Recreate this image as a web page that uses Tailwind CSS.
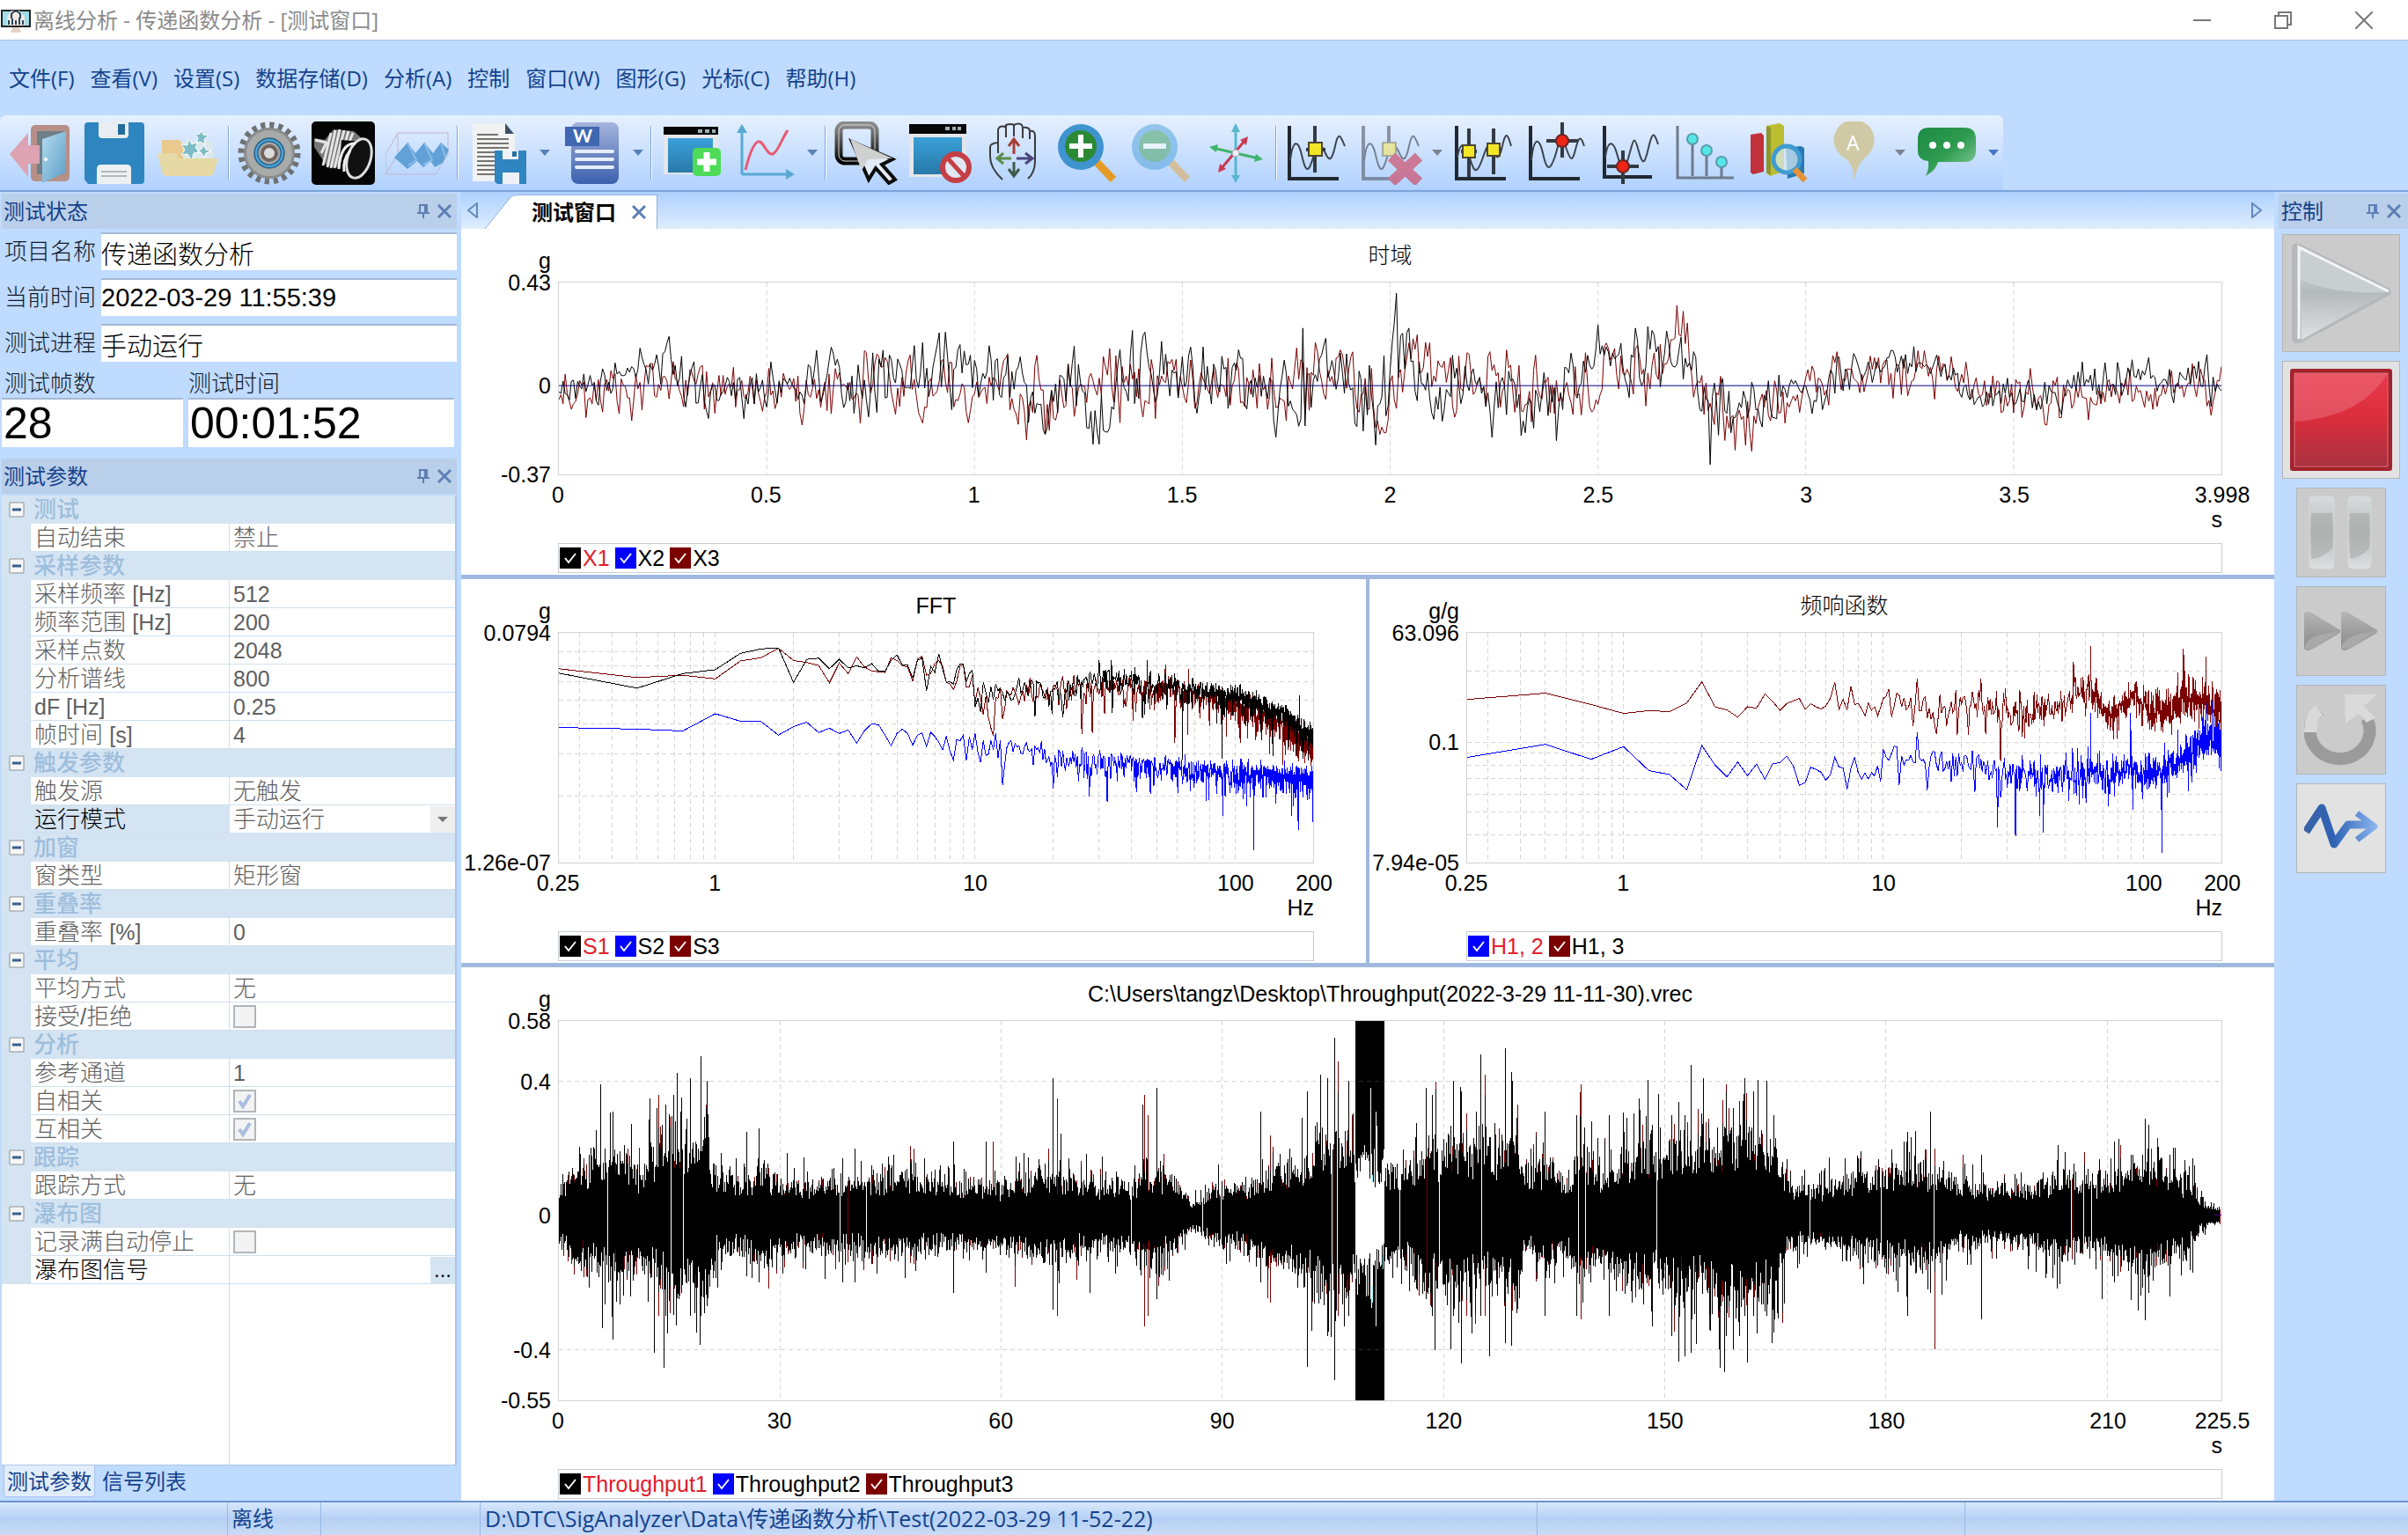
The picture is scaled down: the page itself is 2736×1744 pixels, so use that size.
<!DOCTYPE html>
<html lang="zh-CN">

<head>
  <meta charset="UTF-8">
  <meta name="viewport" content="width=device-width, initial-scale=1.0">
  <title>离线分析 - 传递函数分析 - [测试窗口]</title>
  <script src="https://cdn.jsdelivr.net/npm/@tailwindcss/browser@4"></script>
</head>

<body class="flex min-h-screen flex-col bg-[#bfdbff] font-['Open_Sans','Noto_Sans_CJK_SC',sans-serif] text-2xl leading-8 text-[#15428b]">

  <!-- title bar -->
  <header class="flex h-[45px] items-center bg-white text-[#8a8a8a]">
    <svg class="h-8 w-9 shrink-0" viewBox="0 0 36 32">
      <path d="M2 5h32v18H2z" fill="#9fdde8" stroke="#222" stroke-width="2" />
      <path d="M8 22V12l5-7h9l6 7v10z" fill="#f3e7e0" />
      <path d="M13 14V9q5-7 10 0v5M10 21v-5M14 21v-7M18 21v-5M22 21v-8M26 21v-5" fill="none" stroke="#27465c" stroke-width="2" />
      <path d="M14 24h8l2 6H12z" fill="#e5d3c8" />
    </svg>
    <h1 class="ml-[2px] flex-1">离线分析 - 传递函数分析 - [测试窗口]</h1>
    <button class="grid h-full w-[92px] place-items-center" aria-label="最小化">
      <svg class="size-5" viewBox="0 0 20 20"><path d="M0 10h20" stroke="#777" stroke-width="2" /></svg>
    </button>
    <button class="grid h-full w-[92px] place-items-center" aria-label="还原">
      <svg class="size-5" viewBox="0 0 20 20" fill="none" stroke="#777" stroke-width="2"><path d="M1 5h14v14H1zM5 5V1h14v14h-4" /></svg>
    </button>
    <button class="mr-1 grid h-full w-[92px] place-items-center" aria-label="关闭">
      <svg class="size-5" viewBox="0 0 20 20"><path d="M0 0l20 20M20 0L0 20" stroke="#777" stroke-width="2" /></svg>
    </button>
  </header>

  <!-- menu -->
  <nav class="flex h-[86px] items-center gap-[18px] border-t border-[#a9c4e8] pl-[10px]">
    <a href="#">文件(F)</a>
    <a href="#">查看(V)</a>
    <a href="#">设置(S)</a>
    <a href="#">数据存储(D)</a>
    <a href="#">分析(A)</a>
    <a href="#">控制</a>
    <a href="#">窗口(W)</a>
    <a href="#">图形(G)</a>
    <a href="#">光标(C)</a>
    <a href="#">帮助(H)</a>
  </nav>

  <!-- toolbar -->
  <div class="flex h-[87px] border-b-2 border-[#7ba4dc]">
    <svg class="absolute size-0">
      <defs>
        <linearGradient id="door" x1="0" y1="0" x2="1" y2="1"><stop offset="0" stop-color="#b4dcf0" /><stop offset="1" stop-color="#5c9dc5" /></linearGradient>
        <linearGradient id="word" x1="0" y1="0" x2="0" y2="1"><stop offset="0" stop-color="#a5b4dc" /><stop offset="1" stop-color="#3d60ad" /></linearGradient>
        <linearGradient id="win" x1="0" y1="0" x2="0" y2="1"><stop offset="0" stop-color="#3aa0d8" /><stop offset="1" stop-color="#2879a8" /></linearGradient>
        <linearGradient id="frame" x1="0" y1="0" x2="0" y2="1"><stop offset="0" stop-color="#8c8c8c" /><stop offset="1" stop-color="#050505" /></linearGradient>
        <linearGradient id="chat" x1="0" y1="0" x2="1" y2="1"><stop offset="0" stop-color="#1b8a43" /><stop offset=".5" stop-color="#2e9b50" /><stop offset="1" stop-color="#8fd0a2" /></linearGradient>
        <linearGradient id="grey" x1="0" y1="0" x2="0" y2="1"><stop offset="0" stop-color="#d8dcdc" /><stop offset=".5" stop-color="#b5baba" /><stop offset="1" stop-color="#dfe1e1" /></linearGradient>
        <linearGradient id="red" x1="0" y1="0" x2="0" y2="1"><stop offset="0" stop-color="#e8394a" /><stop offset=".5" stop-color="#d92d3c" /><stop offset="1" stop-color="#a83240" /></linearGradient>
        <linearGradient id="dark" x1="0" y1="0" x2="0" y2="1"><stop offset="0" stop-color="#b5b5b5" /><stop offset="1" stop-color="#888" /></linearGradient>
        <linearGradient id="blue" x1="0" y1="0" x2="84" y2="0" gradientUnits="userSpaceOnUse"><stop offset="0" stop-color="#3a63a8" /><stop offset=".4" stop-color="#2f63b4" /><stop offset="1" stop-color="#8db8f0" /></linearGradient>
      </defs>
    </svg>
    <div class="flex rounded-t-md bg-linear-to-b from-[#e6f0fe] to-[#b0d1ff] pl-1 [&>button]:grid [&>button]:w-[84px] [&>button]:place-items-center [&>button.caret]:w-[22px] [&>button>svg]:size-[72px] [&>button.caret>svg]:h-[7px] [&>button.caret>svg]:w-3 [&>hr]:mx-[3px] [&>hr]:my-3 [&>hr]:h-auto [&>hr]:w-[2px] [&>hr]:border-0 [&>hr]:border-l [&>hr]:border-[#7fa3d4] [&>hr]:bg-white">
      <button aria-label="退出">
        <svg viewBox="0 0 72 72">
          <rect x="25" y="4" width="44" height="64" rx="5" fill="#b68f87" /><rect x="32" y="11" width="31" height="49" fill="#6f7f88" />
          <path d="M38 20l27-9v47l-27 12z" fill="url(#door)" /><path d="M1 37l21-24v14h13v21H22v15z" fill="#dda3b2" /><circle cx="42" cy="43" r="2" fill="#fff" />
        </svg>
      </button>
      <button aria-label="保存">
        <svg viewBox="0 0 72 72">
          <path d="M6 1h60a4 4 0 014 4v62a4 4 0 01-4 4H6l-4-5V5a4 4 0 014-4z" fill="#2f85bf" /><path d="M18 1h34v14q0 4-4 4H22q-4 0-4-4z" fill="#e8edf1" />
          <rect x="40" y="3" width="8" height="12" fill="#246b9c" /><path d="M16 71V54q0-5 5-5h29q5 0 5 5v17z" fill="#edf0f2" /><path d="M21 57h29M21 62h29" stroke="#b5b8ba" stroke-width="2" />
        </svg>
      </button>
      <button aria-label="打开">
        <svg viewBox="0 0 72 72">
          <path d="M6 21h20l5 7h33v25H6z" fill="#e9c98d" /><path d="M30 22h34v26H30z" fill="#dbe9ee" />
          <path d="M36 20l4 6 7-3-3 7 6 5-8 1-2 8-5-7-7 1 4-6-4-6 7 1zM51 10l2 5 6 1-5 4 1 6-5-3-5 2 2-6-3-4 5-1zM54 27l2 5 6 2-6 2-2 5-3-5-5-2 5-3z" fill="#7dbcc4" stroke="#fff" />
          <path d="M1 38q0-2 3-2h18l4 6h44l-5 16q-1 4-5 4H12q-5 0-6-5z" fill="#e6d9a6" />
        </svg>
      </button>
      <hr>
      <button aria-label="设置">
        <svg viewBox="0 0 72 72" fill="none">
          <circle cx="36" cy="36" r="31" stroke="#6f7273" stroke-width="9" stroke-dasharray="5 4.74" /><circle cx="36" cy="36" r="22" fill="#a5a7a7" stroke="#8b8d8d" stroke-width="14" /><circle cx="36" cy="36" r="22" stroke="#a9abab" stroke-width="8" />
          <circle cx="36" cy="36" r="15" stroke="#23668f" stroke-width="5" /><circle cx="36" cy="36" r="15" stroke="#52a9dc" stroke-width="2" /><circle cx="36" cy="36" r="8" fill="#dcdcdc" stroke="#71665f" stroke-width="4" />
        </svg>
      </button>
      <button aria-label="传感器">
        <svg viewBox="0 0 72 72">
          <rect width="72" height="72" rx="5" fill="#050505" /><path d="M3 19l12 2 10-12 23 2 12 11 8 8-15 34-20-11-16-3L3 29z" fill="#777" />
          <path d="M4 21l13 3-6 12M22 13l-9 37M27 10l-9 42M32 9l-10 44M37 10L26 53M42 11L31 49M47 13L36 40" fill="none" stroke="#e4e4e4" stroke-width="3" />
          <path d="M34 21l35 3-14 41-24-10z" fill="#0b0b0b" /><ellipse cx="54" cy="42" rx="13" ry="23" transform="rotate(18 54 42)" fill="#111" stroke="#ddd" stroke-width="3" />
          <path d="M31 54q2-30 19-29M37 57q-2-13 7-24" fill="none" stroke="#eee" stroke-width="3" />
        </svg>
      </button>
      <button aria-label="瀑布图">
        <svg viewBox="0 0 72 72">
          <path d="M0 38l14-25h57v24L57 60H0zM14 13v24M14 37h57M0 60l14-23" fill="none" stroke="#c3b4cc" stroke-width="1" />
          <path d="M10 41l15-17 9 12 10-12 10 12 9-12 9 8-7 15-9 5-5-7-8 7-7-7-11 9z" fill="#62a0d8" /><path d="M25 24l10 20-9 6M44 24l9 20-10 5M63 24l5 17" fill="none" stroke="#89bde7" stroke-width="2" />
        </svg>
      </button>
      <hr>
      <button aria-label="保存报告">
        <svg viewBox="0 0 72 72">
          <path d="M7 2h37l11 12v54H7z" fill="#f1f2f2" /><path d="M44 2l10 12H44z" fill="#3a5268" />
          <path d="M12 15h24M12 20h36M12 25h36M12 30h36M12 35h36M12 40h22M12 45h22M12 50h22M12 55h22M12 60h22" stroke="#77736f" stroke-width="2" />
          <path d="M32 33h36v38H35l-3-3z" fill="#2f85bf" /><path d="M41 33h18v10H41zM41 58h19v13H41z" fill="#eef2f4" /><path d="M52 34h5v6h-5z" fill="#2673a8" />
        </svg>
      </button>
      <button class="caret" aria-label="更多"><svg viewBox="0 0 12 7"><path d="M0 0h12L6 7z" fill="#5981b4" /></svg></button>
      <button aria-label="Word 报告">
        <svg viewBox="0 0 72 72">
          <rect x="13" y="1" width="54" height="70" rx="8" fill="url(#word)" /><rect x="6" y="6" width="39" height="22" fill="#4067b2" />
          <text x="15" y="24" fill="#fff" font-family="Lato" font-size="21" font-weight="bold">W</text><path d="M19 34h41M19 43h41M19 52h41" stroke="#e6ecfa" stroke-width="4" stroke-linecap="round" />
        </svg>
      </button>
      <button class="caret" aria-label="更多"><svg viewBox="0 0 12 7"><path d="M0 0h12L6 7z" fill="#5981b4" /></svg></button>
      <hr>
      <button aria-label="新建窗口">
        <svg viewBox="0 0 72 72">
          <rect x="4" y="6" width="62" height="54" fill="#e4e6ea" /><rect x="4" y="6" width="62" height="9" fill="#060606" /><path d="M43 9h5v4h-5zM51 9h5v4h-5zM59 9h4v4h-4z" fill="#9eb0b5" />
          <rect x="9" y="19" width="51" height="39" fill="url(#win)" /><rect x="37" y="30" width="32" height="32" rx="5" fill="#4edb58" /><path d="M53 35v22M42 46h22" stroke="#fff" stroke-width="7" />
        </svg>
      </button>
      <button aria-label="曲线">
        <svg viewBox="0 0 72 72" fill="none">
          <path d="M9 60V8M9 60h54" stroke="#58aad3" stroke-width="3" /><path d="M9 3l6 10H3zM69 60l-10-6v12z" fill="#58aad3" />
          <path d="M13 55q7-28 14-32c6-3 10 16 17 14 6-2 11-19 17-27" stroke="#e85a73" stroke-width="3" />
        </svg>
      </button>
      <button class="caret" aria-label="更多"><svg viewBox="0 0 12 7"><path d="M0 0h12L6 7z" fill="#5981b4" /></svg></button>
      <hr>
      <button aria-label="选择">
        <svg viewBox="0 0 72 72">
          <rect x="5" y="4" width="41" height="41" rx="7" fill="none" stroke="url(#frame)" stroke-width="9" /><rect x="5" y="4" width="41" height="41" rx="7" fill="none" stroke="#d8d8d8" stroke-width="1" />
          <path d="M20 23l46 20-12 6 15 17-7 4-15-17-8 13z" fill="#e3ecf6" stroke="#0b0b0b" stroke-width="4" /><path d="M18 20l48 22-28 1-7 13z" fill="#cfd0d0" />
        </svg>
      </button>
      <button aria-label="关闭窗口">
        <svg viewBox="0 0 72 72">
          <rect x="1" y="3" width="65" height="60" fill="#e4e6ea" /><rect x="1" y="3" width="65" height="11" fill="#060606" /><path d="M42 6h5v4h-5zM50 6h4v4h-4zM56 6h4v4h-4z" fill="#9eb0b5" />
          <rect x="6" y="18" width="55" height="42" fill="url(#win)" /><circle cx="54" cy="52" r="15" fill="#dee7f2" stroke="#c43f46" stroke-width="6" /><path d="M44 41l20 22" stroke="#c43f46" stroke-width="5" />
        </svg>
      </button>
      <button aria-label="平移">
        <svg viewBox="0 0 72 72" fill="none" stroke="#3b3b3f" stroke-width="2">
          <path d="M23 66Q9 53 9 40V29q0-4 9-5V9q2-5 8-3l1-2q6-2 9 0 6-3 9 0l1 3q8-1 8 4 6-1 6 5v29q0 13-8 20M18 9v15M27 5v13M36 4v13M46 6v13M54 10v10M18 24v12" />
          <path d="M36 21v16M30 28l6-8 6 8" stroke="#a93f35" stroke-width="3" /><path d="M17 42h16M24 36l-7 6 7 6" stroke="#5c8c4c" stroke-width="3" />
          <path d="M39 42h17M49 36l8 6-8 6" stroke="#4d457c" stroke-width="3" /><path d="M36 46v16M30 54l6 8 6-8" stroke="#3d5a49" stroke-width="3" />
        </svg>
      </button>
      <button aria-label="放大">
        <svg viewBox="0 0 72 72">
          <path d="M44 44l21 22" stroke="#e69b27" stroke-width="9" /><circle cx="28" cy="29" r="26" fill="#3f93cf" /><circle cx="28" cy="28" r="18" fill="#2c8a37" /><path d="M28 15v26M15 28h26" stroke="#fff" stroke-width="6" />
        </svg>
      </button>
      <button class="opacity-50" aria-label="缩小">
        <svg viewBox="0 0 72 72">
          <path d="M44 44l21 22" stroke="#e6a43c" stroke-width="9" /><circle cx="28" cy="29" r="26" fill="#4aa0da" /><circle cx="28" cy="28" r="18" fill="#3d9b55" /><path d="M15 28h26" stroke="#fff" stroke-width="6" />
        </svg>
      </button>
      <button aria-label="坐标轴">
        <svg viewBox="0 0 72 72" fill="none" stroke-width="3">
          <path d="M36 8v56" stroke="#58b6cf" /><path d="M36 2l5 10H31zM36 70l5-9H31z" fill="#58b6cf" /><path d="M10 30l52 12" stroke="#3fb36d" /><path d="M6 29l10-3-2 9zM67 43l-10 3 2-9z" fill="#3fb36d" />
          <path d="M20 53l27-32" stroke="#cb3950" /><path d="M50 17l-2 10-7-6zM16 58l2-10 7 6z" fill="#cb3950" /><circle cx="36" cy="36" r="4" fill="#eef" stroke="#aaa" stroke-width="1" />
        </svg>
      </button>
      <hr>
      <button aria-label="单光标">
        <svg viewBox="0 0 72 72" fill="none">
          <path d="M5 5v62M3 65h58" stroke="#222831" stroke-width="4" /><path d="M6 44C9 20 15 20 19 38S26 60 31 44 40 22 45 34 53 46 57 28 63 16 68 28" stroke="#3d444e" stroke-width="2" />
          <path d="M34 5v53M24 32h22" stroke="#333a44" stroke-width="4" /><rect x="27" y="24" width="15" height="15" fill="#f3e626" stroke="#4b4630" stroke-width="2" />
        </svg>
      </button>
      <button class="opacity-60" aria-label="删除光标">
        <svg viewBox="0 0 72 72" fill="none">
          <path d="M5 5v62M3 65h38" stroke="#555b68" stroke-width="4" /><path d="M6 44C9 20 15 20 19 38S26 60 31 44 40 22 45 34 53 46 57 28 63 16 68 28" stroke="#3d444e" stroke-width="2" />
          <path d="M34 5v30" stroke="#555b68" stroke-width="4" /><rect x="27" y="24" width="15" height="15" fill="#f3e660" stroke="#8b8660" stroke-width="2" /><path d="M37 40l31 29M68 40L37 69" stroke="#d0384f" stroke-width="12" />
        </svg>
      </button>
      <button class="caret" aria-label="更多"><svg viewBox="0 0 12 7"><path d="M0 0h12L6 7z" fill="#7a8391" /></svg></button>
      <button aria-label="双光标">
        <svg viewBox="0 0 72 72" fill="none">
          <path d="M5 5v62M3 65h58" stroke="#222831" stroke-width="4" /><path d="M6 40C9 22 15 24 19 38S26 64 33 46 40 22 45 32 53 46 57 28 63 14 67 28" stroke="#3d444e" stroke-width="2" />
          <path d="M19 8v55M47 8v52M10 34h18M38 32h18" stroke="#333a44" stroke-width="4" /><rect x="12" y="27" width="14" height="14" fill="#f3e626" stroke="#4b4630" stroke-width="2" /><rect x="40" y="25" width="14" height="14" fill="#f3e626" stroke="#4b4630" stroke-width="2" />
        </svg>
      </button>
      <button aria-label="峰值">
        <svg viewBox="0 0 72 72" fill="none">
          <path d="M5 5v62M3 65h58" stroke="#222831" stroke-width="4" /><path d="M6 44C9 16 15 18 19 36S26 58 32 42 38 8 44 26 52 48 56 32 62 16 66 28" stroke="#3d444e" stroke-width="2" />
          <path d="M41 1v40M23 22h36" stroke="#333a44" stroke-width="4" /><circle cx="41" cy="22" r="7" fill="#ee2415" stroke="#6b2723" stroke-width="2" />
        </svg>
      </button>
      <button aria-label="谷值">
        <svg viewBox="0 0 72 72" fill="none">
          <path d="M5 5v60M3 63h56" stroke="#222831" stroke-width="4" /><path d="M6 40C9 20 15 22 19 36S26 62 32 42 38 12 44 34 52 42 56 26 62 14 66 26" stroke="#3d444e" stroke-width="2" />
          <path d="M26 33v38M8 51h36" stroke="#333a44" stroke-width="4" /><circle cx="26" cy="51" r="7" fill="#ee2415" stroke="#6b2723" stroke-width="2" />
        </svg>
      </button>
      <button aria-label="谐波">
        <svg viewBox="0 0 72 72" fill="none">
          <path d="M4 5v59H68M21 24v38M37 34v28M54 45v18" stroke="#6f7b8c" stroke-width="3" /><g fill="#55e7e8" stroke="#5b9aa9" stroke-width="2"><circle cx="21" cy="20" r="6" /><circle cx="37" cy="33" r="6" /><circle cx="54" cy="46" r="6" /></g>
        </svg>
      </button>
      <button aria-label="分析">
        <svg viewBox="0 0 72 72">
          <path d="M3 15l12-2 3 3v41l-12 3-3-2z" fill="#c2323a" /><path d="M21 5l15-3 5 3v52l-16 5-4-3z" fill="#bcbd31" /><path d="M21 5l5 2v54l-5-3z" fill="#8c962b" /><path d="M43 30l17-2 4 2v29l-19 6z" fill="#2879b2" />
          <circle cx="44" cy="43" r="15" fill="#d8ebf5" fill-opacity=".7" stroke="#409bd2" stroke-width="5" /><path d="M53 54l12 13" stroke="#e69236" stroke-width="7" />
        </svg>
      </button>
      <button aria-label="标注">
        <svg viewBox="0 0 72 72">
          <path d="M37 67q-2-21-12-26A23 23 0 1151 39q-11 9-14 28z" fill="#cfc9a6" /><text x="28" y="33" fill="#fff" font-family="Open Sans" font-size="23">A</text>
        </svg>
      </button>
      <button class="caret" aria-label="更多"><svg viewBox="0 0 12 7"><path d="M0 0h12L6 7z" fill="#7a8391" /></svg></button>
      <button aria-label="注释">
        <svg viewBox="0 0 72 72">
          <path d="M16 7h40q13 0 13 13v13q0 13-13 13H26q-2 9-14 16 4-8 3-17Q3 44 3 33V20Q3 7 16 7z" fill="url(#chat)" /><g fill="#fff"><circle cx="20" cy="27" r="4" /><circle cx="36" cy="27" r="4" /><circle cx="52" cy="27" r="4" /></g>
        </svg>
      </button>
      <button class="caret" aria-label="更多"><svg viewBox="0 0 12 7"><path d="M0 0h12L6 7z" fill="#4478c4" /></svg></button>
    </div>
  </div>

  <svg class="absolute size-0">
    <symbol id="pin" viewBox="0 0 16 18"><path d="M4 2h8v9H4zM10 2v9M1 11h14M8 11v6" fill="none" stroke="#5c7fb5" stroke-width="2" /></symbol>
    <symbol id="close" viewBox="0 0 16 16"><path d="M1 1l14 14M15 1L1 15" fill="none" stroke="#5c7fb5" stroke-width="3" /></symbol>
    <symbol id="minus" viewBox="0 0 18 18"><path d="M1 1h16v16H1z" fill="#f6f6f4" stroke="#8d9298" stroke-width="1" /><path d="M4 9h10" stroke="#39608f" stroke-width="3" /></symbol>
  </svg>

  <main class="flex flex-1">

    <!-- left panels -->
    <aside class="flex w-[524px] shrink-0 flex-col pr-[5px] pl-[2px]">
      <div class="mt-[2px] flex h-10 items-center gap-2 bg-[#bacfe9] pr-[6px] pl-[2px]">
        <h2 class="flex-1">测试状态</h2>
        <button aria-label="固定"><svg class="h-[18px] w-4"><use href="#pin" /></svg></button>
        <button aria-label="关闭"><svg class="size-4"><use href="#close" /></svg></button>
      </div>
      <form class="font-['Liberation_Sans','Noto_Sans_CJK_SC',sans-serif] text-[26px] font-light text-[#101828] [&_input]:w-full [&_input]:min-w-0 [&_input]:border-t-2 [&_input]:border-[#a5b9d5] [&_input]:bg-white [&_input]:text-black">
        <div class="mt-1 grid grid-cols-[108px_1fr] items-center gap-x-[2px] gap-y-[9px] pl-[3px] [&_input]:h-[43px] [&_input]:text-[29px]">
          <label for="project">项目名称</label>
          <input id="project" value="传递函数分析" readonly>
          <label for="now">当前时间</label>
          <input id="now" class="font-normal" value="2022-03-29 11:55:39" readonly>
          <label for="process">测试进程</label>
          <input id="process" value="手动运行" readonly>
        </div>
        <div class="mt-[9px] grid grid-cols-[206px_1fr] gap-x-[6px] pr-[3px] [&_input]:h-14 [&_input]:pl-[2px] [&_input]:text-[50px] [&_input]:font-normal">
          <label for="frames" class="pl-[3px]">测试帧数</label>
          <label for="elapsed">测试时间</label>
          <input id="frames" value="28" readonly>
          <input id="elapsed" value="00:01:52" readonly>
        </div>
      </form>

      <div class="mt-[13px] flex h-10 items-center gap-2 bg-[#bacfe9] pr-[6px] pl-[2px]">
        <h2 class="flex-1">测试参数</h2>
        <button aria-label="固定"><svg class="h-[18px] w-4"><use href="#pin" /></svg></button>
        <button aria-label="关闭"><svg class="size-4"><use href="#close" /></svg></button>
      </div>
      <div class="mt-[2px] flex flex-1 flex-col border-r-2 border-b border-[#a9c6ea] bg-white">
        <table class="w-full table-fixed border-separate border-spacing-0 bg-[#d5e4f2] text-left font-['Liberation_Sans','Noto_Sans_CJK_SC',sans-serif] text-[26px] leading-[30px] font-light text-[#606060] [&_i]:text-[25px] [&_i]:leading-[30px] [&_i]:font-normal [&_i]:not-italic [&_td]:h-8 [&_td]:overflow-hidden [&_td]:border-b [&_td]:border-l [&_td]:border-[#cfe0ef] [&_td]:bg-white [&_td]:py-0 [&_td]:pl-1 [&_th]:h-8 [&_th]:py-0 [&_th]:font-medium [&_th]:text-[#9dbedd] [&_th_svg]:mx-2 [&_th_svg]:size-[18px]">
          <colgroup><col class="w-8"><col class="w-[226px]"><col></colgroup>
          <tbody>
            <tr><th><svg><use href="#minus" /></svg></th><th colspan="2" class="pl-1">测试</th></tr>
            <tr><th></th><td>自动结束</td><td>禁止</td></tr>
            <tr><th><svg><use href="#minus" /></svg></th><th colspan="2" class="pl-1">采样参数</th></tr>
            <tr><th></th><td>采样频率 <i>[Hz]</i></td><td><i>512</i></td></tr>
            <tr><th></th><td>频率范围 <i>[Hz]</i></td><td><i>200</i></td></tr>
            <tr><th></th><td>采样点数</td><td><i>2048</i></td></tr>
            <tr><th></th><td>分析谱线</td><td><i>800</i></td></tr>
            <tr><th></th><td><i>dF [Hz]</i></td><td><i>0.25</i></td></tr>
            <tr><th></th><td>帧时间 <i>[s]</i></td><td><i>4</i></td></tr>
            <tr><th><svg><use href="#minus" /></svg></th><th colspan="2" class="pl-1">触发参数</th></tr>
            <tr><th></th><td>触发源</td><td>无触发</td></tr>
            <tr class="[&>td:nth-child(2)]:bg-[#d5e4f2]">
              <th></th>
              <td class="text-black"><label for="mode">运行模式</label></td>
              <td>
                <div class="flex items-center">
                  <select id="mode" class="h-[30px] flex-1 appearance-none p-0 leading-[30px]" disabled><option>手动运行</option></select>
                  <span class="grid h-[30px] w-7 place-items-center bg-[#efefef]"><svg class="h-[6px] w-3" viewBox="0 0 12 6"><path d="M0 0h12L6 6z" fill="#777" /></svg></span>
                </div>
              </td>
            </tr>
            <tr><th><svg><use href="#minus" /></svg></th><th colspan="2" class="pl-1">加窗</th></tr>
            <tr><th></th><td>窗类型</td><td>矩形窗</td></tr>
            <tr><th><svg><use href="#minus" /></svg></th><th colspan="2" class="pl-1">重叠率</th></tr>
            <tr><th></th><td>重叠率 <i>[%]</i></td><td><i>0</i></td></tr>
            <tr><th><svg><use href="#minus" /></svg></th><th colspan="2" class="pl-1">平均</th></tr>
            <tr><th></th><td>平均方式</td><td>无</td></tr>
            <tr><th></th><td><label for="accept">接受/拒绝</label></td><td><input id="accept" type="checkbox" class="block size-[26px] appearance-none border-2 border-[#b2b5b8] bg-[#f3f3f3]" disabled></td></tr>
            <tr><th><svg><use href="#minus" /></svg></th><th colspan="2" class="pl-1">分析</th></tr>
            <tr><th></th><td>参考通道</td><td><i>1</i></td></tr>
            <tr>
              <th></th><td><label for="auto">自相关</label></td>
              <td><div class="relative"><input id="auto" type="checkbox" class="block size-[26px] appearance-none border-2 border-[#b2b5b8] bg-[#f3f3f3]" checked disabled><svg class="pointer-events-none absolute top-0 left-0 size-[26px]" viewBox="0 0 26 26"><path d="M7 13l4 6 8-13" fill="none" stroke="#a9bde0" stroke-width="4" /></svg></div></td>
            </tr>
            <tr>
              <th></th><td><label for="cross">互相关</label></td>
              <td><div class="relative"><input id="cross" type="checkbox" class="block size-[26px] appearance-none border-2 border-[#b2b5b8] bg-[#f3f3f3]" checked disabled><svg class="pointer-events-none absolute top-0 left-0 size-[26px]" viewBox="0 0 26 26"><path d="M7 13l4 6 8-13" fill="none" stroke="#a9bde0" stroke-width="4" /></svg></div></td>
            </tr>
            <tr><th><svg><use href="#minus" /></svg></th><th colspan="2" class="pl-1">跟踪</th></tr>
            <tr><th></th><td>跟踪方式</td><td>无</td></tr>
            <tr><th><svg><use href="#minus" /></svg></th><th colspan="2" class="pl-1">瀑布图</th></tr>
            <tr><th></th><td><label for="full">记录满自动停止</label></td><td><input id="full" type="checkbox" class="block size-[26px] appearance-none border-2 border-[#b2b5b8] bg-[#f3f3f3]" disabled></td></tr>
            <tr><th></th><td class="text-black">瀑布图信号</td><td><button class="ml-auto block h-[30px] w-7 bg-[#d5e4f2] text-center text-2xl leading-[30px] text-black">...</button></td></tr>
          </tbody>
        </table>
        <div class="ml-[258px] flex-1 border-l border-[#cfe0ef]"></div>
      </div>
      <div class="flex h-10 items-start gap-2 pl-[2px]">
        <button class="h-9 rounded-b border border-t-0 border-[#a6c4ea] bg-[#e2edfc] px-[3px]">测试参数</button>
        <button class="h-9">信号列表</button>
      </div>
    </aside>

    <!-- chart window -->
    <section class="flex min-w-0 flex-1 flex-col">
      <div class="flex h-[42px] items-end bg-linear-to-b from-[#acd1ff] to-[#e0edff] text-black">
        <button class="mb-3 ml-[7px]" aria-label="向左"><svg class="h-[18px] w-3" viewBox="0 0 12 18"><path d="M11 1v16L1 9z" fill="none" stroke="#6489bd" stroke-width="2" /></svg></button>
        <svg class="ml-2 h-[39px] w-9" viewBox="0 0 36 39"><path d="M0 39L30 2q2-2 6-2v39z" fill="#fff" /><path d="M0 39L30 2q2-1 6-1" fill="none" stroke="#8db0de" /></svg>
        <div class="flex h-[39px] items-center border-t border-r border-[#8db0de] bg-white pr-3 pl-[17px] font-bold">
          测试窗口
          <button class="ml-[18px]" aria-label="关闭"><svg class="size-4"><use href="#close" /></svg></button>
        </div>
        <button class="mr-[14px] mb-3 ml-auto" aria-label="向右"><svg class="h-[18px] w-3" viewBox="0 0 12 18"><path d="M1 1v16L11 9z" fill="none" stroke="#6489bd" stroke-width="2" /></svg></button>
      </div>
      <div class="grid flex-1 grid-cols-2 grid-rows-[393fr_437fr_606fr] gap-x-1 gap-y-[5px] bg-[#9fb9de] font-['Liberation_Sans','Noto_Sans_CJK_SC',sans-serif] text-[25px] font-light text-black">
        <figure id="time" class="col-span-2 flex flex-col bg-white pr-[59px] pb-[2px] pl-[110px]"></figure>
        <figure id="fft" class="flex flex-col bg-white pr-[59px] pb-[2px] pl-[110px]"></figure>
        <figure id="frf" class="flex flex-col bg-white pr-[59px] pb-[2px] pl-[110px]"></figure>
        <figure id="record" class="col-span-2 flex flex-col bg-white pr-[59px] pb-[2px] pl-[110px]"></figure>
      </div>
    </section>

    <!-- run controls -->
    <aside class="flex w-[152px] shrink-0 flex-col items-center gap-[10px] [&>button]:grid [&>button]:size-[102px] [&>button]:place-items-center [&>button]:border [&>button]:border-[#b5b5b5] [&>button]:bg-[#cbcbcb]">
      <div class="mt-[2px] -mb-1 flex h-10 w-[147px] items-center gap-2 self-end bg-[#bacfe9] pr-2 pl-[3px]">
        <h2 class="flex-1">控制</h2>
        <button aria-label="固定"><svg class="h-[18px] w-4"><use href="#pin" /></svg></button>
        <button aria-label="关闭"><svg class="size-4"><use href="#close" /></svg></button>
      </div>
      <button class="h-[134px]! w-[134px]!" aria-label="开始">
        <svg class="size-[116px]" viewBox="0 0 116 116"><path d="M2 6q1-6 9-4l101 50q5 4 0 9L13 114q-9 3-11-4z" fill="#b5b9b9" /><path d="M10 5l102 51-99 55z" fill="url(#grey)" /><path d="M10 42q40 18 102 15L13 5z" fill="#c9cece" /><path d="M10 110V6l102 50" fill="none" stroke="#f4f6f6" stroke-width="3" /></svg>
      </button>
      <button class="h-[134px]! w-[134px]! bg-[#e2e2e2]!" aria-label="停止">
        <svg class="size-[116px]" viewBox="0 0 116 116"><rect width="116" height="116" rx="3" fill="#a3232d" /><rect x="5" y="5" width="106" height="106" fill="url(#red)" /><path d="M5 5h106q-30 50-106 55z" fill="#f08593" fill-opacity=".4" /><path d="M5 111V5h106v106z" fill="none" stroke="#d9707c" /></svg>
      </button>
      <button aria-label="暂停">
        <svg class="size-[84px]" viewBox="0 0 84 84"><rect x="6" y="1" width="28" height="82" rx="4" fill="url(#grey)" stroke="#d7d7d7" /><rect x="50" y="1" width="26" height="82" rx="4" fill="url(#grey)" stroke="#d7d7d7" /><path d="M8 20h24v40q-12 12-24 12zM52 20h22v40q-12 12-22 12z" fill="#aaa" fill-opacity=".6" /></svg>
      </button>
      <button aria-label="快进">
        <svg class="size-[84px]" viewBox="0 0 84 84"><path d="M0 22q2-4 8-1l33 20q1 2-2 4L8 63q-6 2-8-1zM42 22q2-4 8-1l33 20q1 2-2 4L50 63q-6 2-8-1z" fill="url(#dark)" /><path d="M0 62q1-16 41-20L8 63zM42 62q1-16 41-20L50 63z" fill="#a9a9a9" /></svg>
      </button>
      <button aria-label="重新开始">
        <svg class="size-[84px]" viewBox="0 0 84 84"><path d="M71 29A34 32 0 1117 20" fill="none" stroke="#9b9b9b" stroke-width="14" /><path d="M7 45q0-18 10-25" fill="none" stroke="#d9d9d9" stroke-width="14" /><path d="M46 2h37L68 15l13 14-11 5q-2-7-9-10L47 35z" fill="#dadada" /></svg>
      </button>
      <button class="bg-[#e2e2e2]!" aria-label="单步">
        <svg class="size-[84px]" viewBox="0 0 84 84" fill="none" stroke="url(#blue)" stroke-linejoin="round"><path d="M2 46l18-27 14 41 16-22h24" stroke-width="9" /><path d="M60 25l20 15-20 15" stroke-width="7" /></svg>
      </button>
    </aside>
  </main>

  <!-- status bar -->
  <footer class="flex h-[39px] items-center border-t-2 border-[#6c93cc] bg-linear-to-b from-[#d8e8fc] via-[#b5d0f4] to-[#cadcf6] text-[25px] [&>div]:h-full [&>div]:border-l [&>div]:border-[#98b8e4] [&>div]:pt-[2px]">
    <p class="w-[258px]"></p>
    <div class="w-[106px] pl-1 text-2xl leading-8">离线</div>
    <div class="w-[181px]"></div>
    <div class="w-[1201px] pl-[5px]">D:\DTC\SigAnalyzer\Data\传递函数分析\Test(2022-03-29 11-52-22)</div>
    <div class="w-[486px]"></div>
    <div class="flex-1"></div>
  </footer>

  <script>
    const BLACK = '#000000', BLUE = '#0000ff', RED = '#7b0000';
    let seed = 20220329;

    function rand() {
      seed = (seed * 1664525 + 1013904223) % 4294967296;
      return seed / 4294967296;
    }

    // linear interpolation through a flat list x0, y0, x1, y1, ...
    function lerp(pts, x) {
      for (let i = 2; i < pts.length; i += 2) {
        if (x <= pts[i]) {
          return pts[i - 1] + (pts[i + 1] - pts[i - 1]) * Math.max(0, x - pts[i - 2]) / (pts[i] - pts[i - 2]);
        }
      }
      return pts[pts.length - 1];
    }

    const logX = f => 1000 * Math.log(f / 0.25) / Math.log(800);
    const line = (d, color) => `<path d="${d}" stroke="${color}" fill="none" />`;

    // every plot uses a 1000 x 1000 box that is stretched over the plot area
    function chart(id, o) {
      let grid = '';
      o.gridX.forEach(x => grid += `M${x} 0V1000`);
      o.gridY.forEach(y => grid += `M0 ${y}H1000`);
      document.getElementById(id).innerHTML = `
        <div class="relative flex h-[60px] items-center justify-center">
          <span class="absolute right-full bottom-2 mr-2">${o.unitY}</span>
          <figcaption>${o.title}</figcaption>
        </div>
        <div class="relative min-h-[120px] flex-1 border border-[#d2d2d2]">
          <svg class="absolute inset-0 isolate size-full bg-white [&>path]:[vector-effect:non-scaling-stroke]" viewBox="0 0 1000 1000" preserveAspectRatio="none" shape-rendering="crispEdges">
            <path d="${grid}" stroke="#d4d4d4" stroke-dasharray="5 4" />
            ${o.body}
          </svg>
          ${o.ticksY.map(t => `<span class="absolute right-full mr-[9px] -translate-y-1/2 whitespace-nowrap" style="top:${t[0] / 10}%">${t[1]}</span>`).join('')}
        </div>
        <div class="relative h-[77px]">
          ${o.ticksX.map(t => `<span class="absolute top-[6px] -translate-x-1/2" style="left:${t[0] / 10}%">${t[1]}</span>`).join('')}
          <span class="absolute top-[34px] right-0">${o.unitX}</span>
        </div>
        <div class="flex h-[34px] items-center gap-[6px] border border-[#c8ccd4] pl-px">
          ${o.legend.map((l, i) => `
            <label class="flex items-center gap-[2px] ${i ? '' : 'text-[#e0202c]'}">
              <span class="relative">
                <input type="checkbox" class="block size-6 appearance-none" style="background:${l[1]}" checked>
                <svg class="pointer-events-none absolute inset-0 size-6" viewBox="0 0 24 24"><path d="M6 12l4 5 8-10" fill="none" stroke="#fff" stroke-width="2" /></svg>
              </span>${l[0]}
            </label>`).join('')}
        </div>`;
    }

    // time domain
    function timeTrace(mean, amp, peaks) {
      const n = 800;
      let d = '', s = 0;
      for (let i = 0; i <= n; i++) {
        const t = 3.998 * i / n;
        s = s * 0.3 + (rand() + rand() - 1);
        let v = lerp(mean, t) + s * lerp(amp, t) * 1.45;
        peaks.forEach(p => { if (Math.abs(p[0] - t) < 0.0026) v = p[1]; });
        d += `${i ? 'L' : 'M'}${(1000 * i / n).toFixed(1)} ${((0.43 - v) / 0.8 * 1000).toFixed(0)}`;
      }
      return d;
    }

    const timeRed = timeTrace(
      [0, -.05, .2, -.02, .6, -.02, .85, .05, 1.2, -.08, 1.3, .03, 1.8, -.02, 1.9, .12, 1.97, -.1, 2.05, .12, 2.2, 0, 2.45, -.02, 2.62, .05, 2.7, .2, 2.78, -.1, 2.85, -.18, 3.0, 0, 3.3, .05, 3.5, -.05, 4, 0],
      [0, .08, .5, .1, 1, .12, 1.4, .12, 2, .13, 2.4, .13, 2.8, .1, 3.2, .07, 3.5, .09, 4, .08],
      [[2.705, .31], [2.83, -.27]]);
    const timeBlack = timeTrace(
      [0, -.03, .25, .09, .35, -.07, .5, -.02, .6, .05, .7, -.05, .8, .07, 1.1, .05, 1.17, -.1, 1.25, .05, 1.29, -.13, 1.38, .08, 1.7, .03, 1.77, -.12, 1.85, .1, 1.97, -.12, 2.03, .15, 2.12, -.03, 2.4, -.06, 2.45, .1, 2.7, .12, 2.78, -.14, 2.95, -.05, 3.1, .04, 3.2, .11, 3.33, .09, 3.4, -.07, 3.55, -.04, 3.75, .06, 4, 0],
      [0, .07, .5, .1, 1, .13, 1.4, .12, 2, .14, 2.4, .12, 2.8, .11, 3.1, .09, 3.3, .05, 3.6, .08, 4, .07],
      [[2.015, .385], [2.045, .24], [1.285, -.245], [2.77, -.33], [1.38, .23], [2.4, -.23], [1.79, .24]]);

    chart('time', {
      title: '时域', unitY: 'g', unitX: 's',
      gridX: [125, 250, 375, 500, 625, 750, 875], gridY: [],
      ticksX: [[0, '0'], [125, '0.5'], [250, '1'], [375, '1.5'], [500, '2'], [625, '2.5'], [750, '3'], [875, '3.5'], [1000, '3.998']],
      ticksY: [[0, '0.43'], [538, '0'], [1000, '-0.37']],
      legend: [['X1', BLACK], ['X2', BLUE], ['X3', RED]],
      body: line(timeRed, RED) + line(timeBlack, BLACK) + line('M0 538H1000', '#000080'),
    });

    // log of a Rayleigh distributed magnitude, as the bins of a noise spectrum have
    const logNoise = () => Math.log(Math.sqrt(-2 * Math.log(1 - rand() * 0.9999) + 0.002) * 0.8);

    // spectra: head of the curve point by point, then trend plus noise, one point per 0.25 Hz
    function spectrum(head, trend, amp, peaks, ratio) {
      let d = '';
      for (let k = 1; k <= 800; k++) {
        const f = k / 4;
        let y = head[k - 1];
        if (y === undefined) {
          y = lerp(trend, f) - amp * (logNoise() - (ratio ? logNoise() : 0));
        }
        peaks.forEach(p => { if (p[0] === f) y = p[1]; });
        d += `${k > 1 ? 'L' : 'M'}${logX(f).toFixed(1)} ${((y - 205) / 0.789).toFixed(0)}`;
      }
      return d;
    }

    const logGrid = [];
    for (let dec = 0.1; dec < 200; dec *= 10) {
      for (let m = 1; m < 10; m++) {
        if (dec * m > 0.26 && dec * m < 199) logGrid.push(logX(dec * m).toFixed(1));
      }
    }
    const freqTicks = [[0, '0.25'], [logX(1), '1'], [logX(10), '10'], [logX(100), '100'], [1000, '200']];

    const s1 = spectrum([343, 394, 345, 331, 275, 260, 256, 375, 296, 292, 328, 296, 325, 318, 325, 311, 337, 337, 300, 280, 316, 316, 360, 300, 290, 405, 320, 340, 277, 330, 375, 372, 380, 330, 313, 312, 372, 345, 332],
      [10, 400, 15, 395, 22, 405, 30, 360, 50, 380, 80, 410, 110, 430, 140, 470, 170, 510, 200, 565], 48, [[30, 298], [33.5, 298], [46, 300], [62.75, 640], [89, 635], [177, 418], [10, 458]]);
    const s3 = spectrum([328, 358, 350, 363, 301, 290, 258, 300, 307, 317, 376, 308, 345, 288, 322, 336, 338, 341, 290, 300, 318, 322, 370, 295, 285, 350, 345, 310, 300, 320, 375, 380, 400, 370, 320, 313, 390, 390, 350],
      [10, 420, 20, 405, 30, 395, 50, 400, 80, 430, 110, 460, 140, 500, 170, 550, 200, 600], 52, [[28.25, 550], [54, 313], [66.25, 330]]);
    const s2 = spectrum([529, 535, 541, 482, 508, 509, 555, 526, 511, 547, 532, 550, 538, 583, 540, 517, 520, 555, 592, 550, 535, 550, 590, 555, 548, 595, 545, 560, 580, 605, 560, 610, 640, 570, 575, 555, 642, 560, 605],
      [10, 590, 13, 600, 20, 635, 30, 640, 50, 665, 100, 685, 200, 700], 46, [[12.75, 725], [20, 738], [27.5, 765], [32.25, 785], [90, 832], [118, 950], [165, 832], [175.25, 880], [200, 852]]);

    chart('fft', {
      title: 'FFT', unitY: 'g', unitX: 'Hz',
      gridX: logGrid, gridY: [84, 144, 213, 293, 395, 526, 707],
      ticksX: freqTicks, ticksY: [[0, '0.0794'], [1000, '1.26e-07']],
      legend: [['S1', BLACK], ['S2', BLUE], ['S3', RED]],
      body: line(s3, RED) + line(s1, BLACK) + line(s2, BLUE),
    });

    const h3 = spectrum([433, 412, 450, 481, 472, 475, 446, 373, 458, 469, 494, 458, 463, 415, 440, 470, 447, 438, 430, 467, 448, 458, 466, 455, 430, 375, 468, 432, 470, 388, 450, 447, 465, 490, 445, 470, 458, 490, 460],
      [10, 440, 15, 475, 22, 440, 30, 490, 40, 470, 50, 450, 58, 390, 65, 430, 75, 500, 90, 410, 105, 480, 130, 465, 150, 425, 200, 470], 42, [[62.75, 250], [143, 259], [13.5, 362], [28.25, 645]], true);
    const h2 = spectrum([632, 587, 638, 595, 677, 690, 742, 591, 658, 698, 648, 694, 655, 706, 653, 650, 627, 660, 727, 718, 665, 673, 682, 709, 692, 631, 665, 667, 740, 668, 633, 684, 706, 685, 705, 685, 695, 660, 715],
      [10, 630, 15, 655, 20, 660, 30, 700, 45, 705, 60, 690, 100, 690, 125, 670, 150, 620, 170, 570, 200, 565], 42, [[27.5, 872], [32.25, 902], [41.25, 888], [62.75, 480], [89.5, 480], [118, 960], [13.5, 545]], true);

    chart('frf', {
      title: '频响函数', unitY: 'g/g', unitX: 'Hz',
      gridX: logGrid, gridY: [167, 475, 521, 574, 631, 700, 779, 878],
      ticksX: freqTicks, ticksY: [[0, '63.096'], [475, '0.1'], [1000, '7.94e-05']],
      legend: [['H1, 2', BLUE], ['H1, 3', RED]],
      body: line(h3, RED) + line(h2, BLUE),
    });

    // throughput recording, one min/max column per pixel
    const envelope = [0, .06, 2, .13, 5, .16, 8, .2, 11, .14, 13, .2, 15, .25, 18, .22, 20, .24, 21.5, .12, 25, .1, 28, .14, 30, .1, 37, .1, 45, .12, 50, .1, 55, .09, 60, .09, 63, .12, 68, .12, 72, .1, 78, .1, 81, .14, 84, .09, 86, .04, 90, .09, 94, .09, 97, .14, 101, .17, 103, .23, 106, .22, 110, .17, 114, .13, 118, .2, 122, .22, 126, .21, 130, .27, 131, .1, 134, .17, 137, .11, 138.5, .2, 142, .12, 145, .2, 149, .2, 153, .25, 156, .21, 159, .27, 163, .25, 165, .22, 167, .09, 172, .09, 178, .12, 183, .15, 187, .13, 190, .09, 195, .08, 200, .09, 204, .12, 208, .09, 211, .13, 215, .17, 217, .14, 221, .11, 223, .04, 225.5, .02];
    const yOf = v => ((0.58 - v) / 1.13 * 1000).toFixed(0);
    let black = '', red = '';
    for (let i = 0; i < 1890; i++) {
      const t = 225.5 * i / 1890;
      const a = lerp(envelope, t);
      const top = a * (0.6 + 0.6 * rand() + 1.0 * rand() ** 6);
      const low = a * (0.65 + 0.6 * rand() + 0.9 * rand() ** 6);
      const x = (i / 1.89).toFixed(2);
      if (rand() < 0.12) red += `M${x} ${yOf(top)}V${yOf(-low)}`;
      if (rand() < 0.985) black += `M${x} ${yOf(top * (0.75 + 0.25 * rand()))}V${yOf(-low * (0.7 + 0.3 * rand()))}`;
    }
    [[5.7, .39, 0], [7.4, .31, -.37], [12.4, .35, 0], [12.9, 0, -.41], [14.5, .33, -.3], [17.8, .41, -.3], [18.7, 0, -.35], [19.3, .475, -.3], [25.5, .25, -.18], [27.2, .26, 0], [38.5, .17, -.2], [40.2, .2, -.2], [53.5, .22, -.23], [58, .22, -.17], [67, .41, -.28], [72, .1, -.23], [79.2, .33, 0], [81.1, .38, -.25], [95.2, .31, -.2], [101.5, .37, -.45], [103.3, .42, -.25], [104.3, .41, -.36], [105.2, .53, -.49], [107.1, .4, -.3], [110.1, .38, -.25], [110.8, .31, -.33], [117.7, .38, -.25], [118.5, .36, -.3], [121, 0, -.4], [121.4, .4, -.3], [122.4, .37, -.44], [125, .48, -.3], [126.2, .2, -.42], [128.4, .5, -.38], [129.2, .42, -.39], [129.4, .4, 0], [133.8, .31, -.3], [138, .3, -.3], [142.5, .3, -.3], [146.5, .35, -.2], [148.3, .27, -.33], [150.9, .3, -.36], [152.7, .3, -.42], [153.6, .45, -.41], [157.5, 0, -.455], [158.4, .33, -.36], [159.3, .32, -.4], [160.8, .41, -.3], [162, .37, -.3], [163.9, .4, -.3], [164.8, .3, -.35], [182.9, .25, -.3], [186, .31, -.23], [193, .18, -.31], [204.3, .19, -.1], [209.3, 0, -.25], [211, .22, -.2], [215.2, .29, -.2], [215.6, .27, -.23], [221.6, .17, -.17]]
      .forEach(p => black += `M${(p[0] / 0.2255).toFixed(2)} ${yOf(p[1])}V${yOf(p[2])}`);
    [[13.6, .36, -.3], [20, .33, -.2], [58.9, .22, -.1], [67.6, .35, -.3], [79.5, .36, -.33], [79.9, .3, -.3], [96.5, .24, -.26], [105.7, .46, -.3], [107.6, .3, -.2], [125.6, .42, -.3], [130, .33, -.2], [138.7, .39, -.31], [160.2, .34, -.3], [186.7, .2, -.4], [216, .2, -.15]]
      .forEach(p => red += `M${(p[0] / 0.2255).toFixed(2)} ${yOf(p[1])}V${yOf(p[2])}`);

    // the selected time span is shown inverted
    const secs = [30, 60, 90, 120, 150, 180, 210];
    chart('record', {
      title: 'C:\\Users\\tangz\\Desktop\\Throughput(2022-3-29 11-11-30).vrec', unitY: 'g', unitX: 's',
      gridX: secs.map(s => s / 0.2255), gridY: [159, 867],
      ticksX: [[0, '0'], ...secs.map(s => [s / 0.2255, s]), [1000, '225.5']],
      ticksY: [[0, '0.58'], [159, '0.4'], [513, '0'], [867, '-0.4'], [1000, '-0.55']],
      legend: [['Throughput1', BLACK], ['Throughput2', BLUE], ['Throughput3', RED]],
      body: line(red, RED) + line(black, BLACK) + line('M996 513H1000', '#4b0082')
        + '<rect class="mix-blend-difference" x="479" y="0" width="17.4" height="1000" fill="#fff" />',
    });
  </script>
</body>

</html>
